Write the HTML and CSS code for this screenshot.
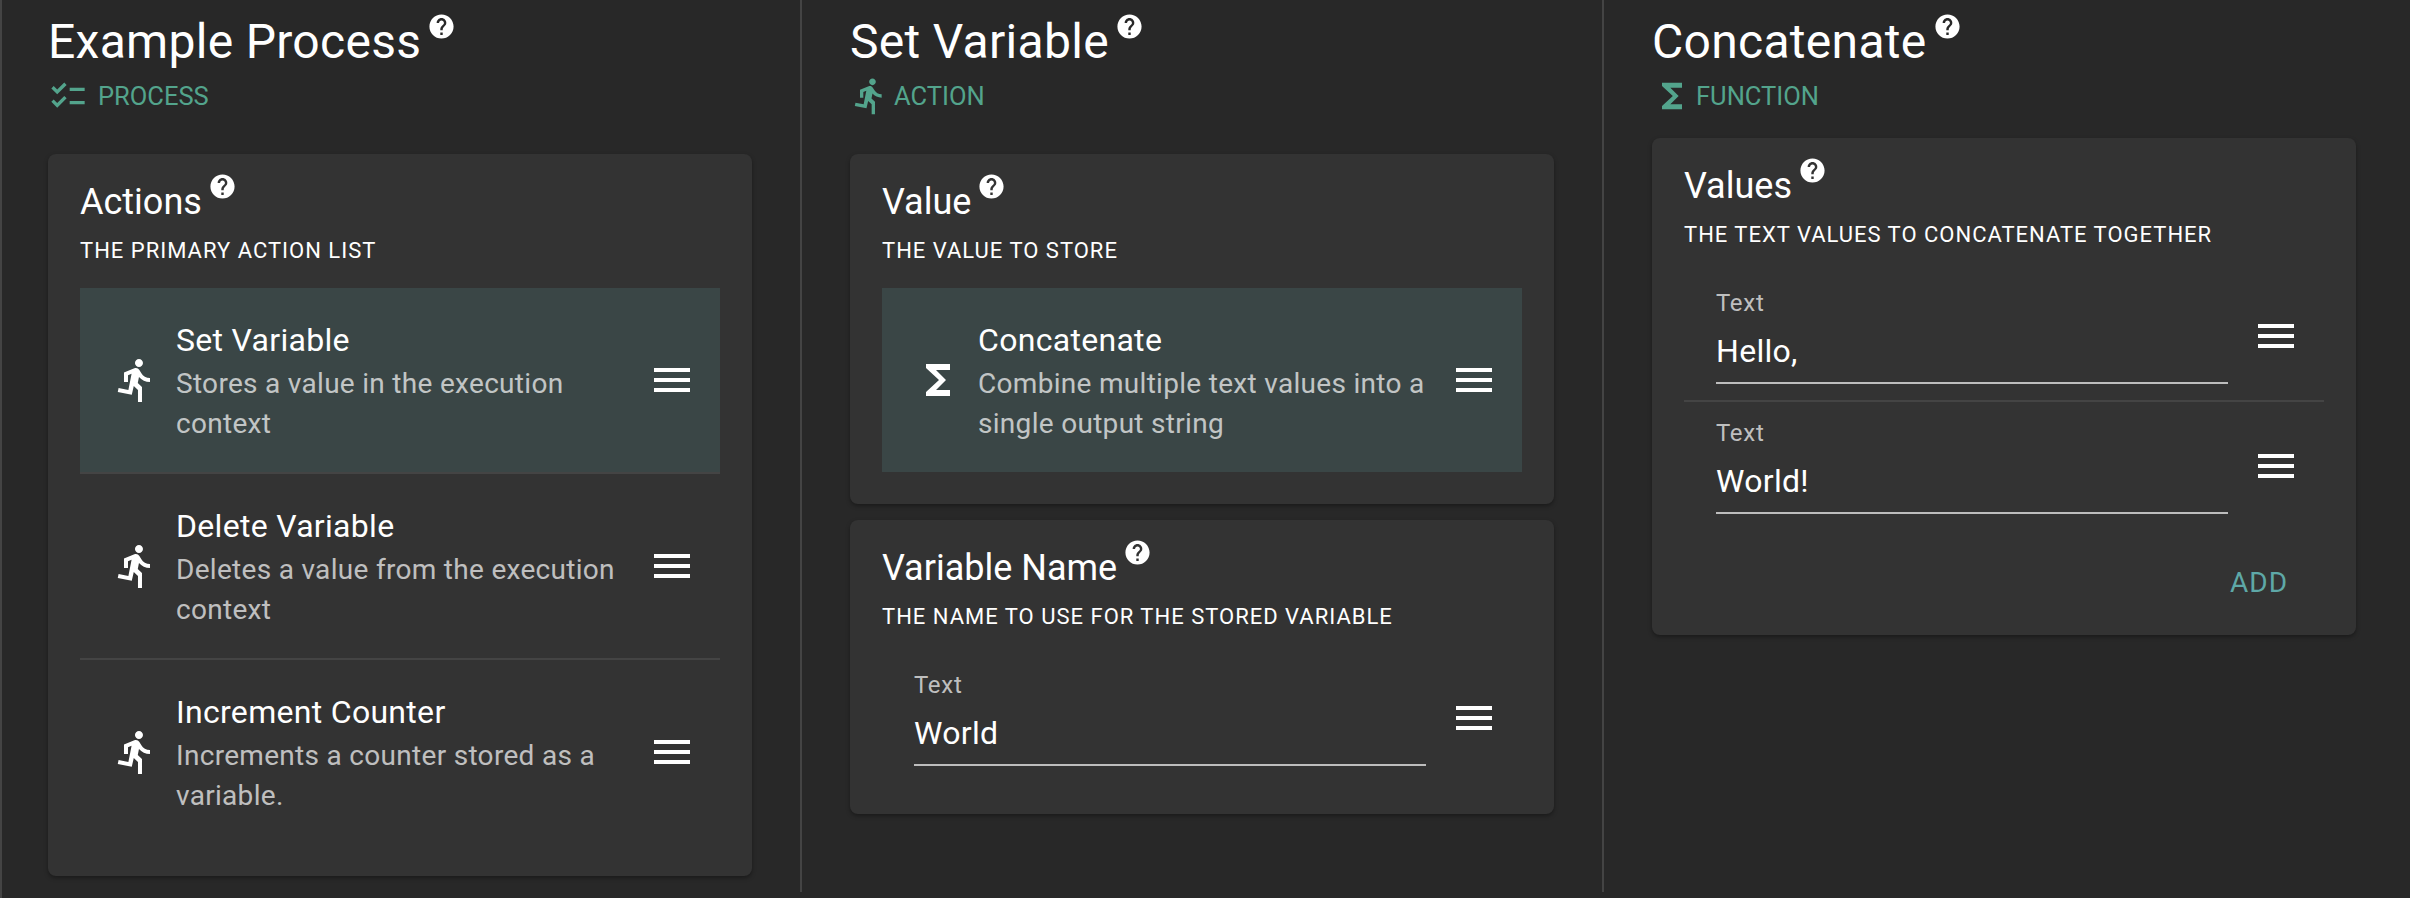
FILE: index.html
```html
<!DOCTYPE html>
<html lang="en">

<head>
    <meta charset="UTF-8">
    <title>Example Process</title>
    <link rel="stylesheet" href="styles.css">
</head>

<body>
    <!-- Shared icons -->
    <svg class="icon-defs" width="0" height="0">
        <symbol id="i-help" viewBox="0 0 24 24"><path d="M12 2C6.48 2 2 6.48 2 12s4.48 10 10 10 10-4.48 10-10S17.52 2 12 2zm1 17h-2v-2h2v2zm2.07-7.75l-.9.92C13.45 12.9 13 13.5 13 15h-2v-.5c0-1.1.45-2.1 1.17-2.83l1.24-1.26c.37-.36.59-.86.59-1.41 0-1.1-.9-2-2-2s-2 .9-2 2H8c0-2.21 1.79-4 4-4s4 1.79 4 4c0 .88-.36 1.68-.93 2.25z"/></symbol>
        <symbol id="i-run" viewBox="0 0 24 24"><path d="M13.49 5.48c1.1 0 2-.9 2-2s-.9-2-2-2-2 .9-2 2 .9 2 2 2zm-3.6 13.9l1-4.4 2.1 2v6h2v-7.5l-2.1-2 .6-3c1.3 1.5 3.3 2.5 5.5 2.5v-2c-1.9 0-3.5-1-4.3-2.4l-1-1.6c-.4-.6-1-1-1.7-1-.3 0-.5.1-.8.1l-5.2 2.2v4.7h2v-3.4l1.8-.7-1.6 8.1-4.9-1-.4 2 7 1.4z"/></symbol>
        <symbol id="i-sigma" viewBox="0 0 24 24"><path d="M18 4H6v2l6.5 6L6 18v2h12v-3h-7l5-5-5-5h7z"/></symbol>
        <symbol id="i-checks" viewBox="0 0 24 24"><path d="M22 7h-9v2h9V7zm0 8h-9v2h9v-2zM5.54 11L2 7.46l1.41-1.41 2.12 2.12 4.24-4.24 1.41 1.41L5.54 11zm0 8L2 15.46l1.41-1.41 2.12 2.12 4.24-4.24 1.41 1.41L5.54 19z"/></symbol>
        <symbol id="i-menu" viewBox="0 0 24 24"><path d="M3 18h18v-2H3v2zm0-5h18v-2H3v2zm0-7v2h18V6H3z"/></symbol>
    </svg>

    <div class="panels">
        <!-- Process -->
        <section class="panel">
            <header class="panel-header">
                <h1>Example Process <svg class="help"><use href="#i-help"/></svg></h1>
                <div class="kind"><svg class="kind-icon kind-icon-wide"><use href="#i-checks"/></svg>PROCESS</div>
            </header>
            <div class="card-stack">
                <div class="card">
                    <h2>Actions <svg class="help"><use href="#i-help"/></svg></h2>
                    <div class="card-sub">THE PRIMARY ACTION LIST</div>
                    <div class="list">
                        <div class="list-item selected">
                            <svg class="item-icon"><use href="#i-run"/></svg>
                            <div class="item-text">
                                <div class="item-title">Set Variable</div>
                                <div class="item-desc">Stores a value in the execution context</div>
                            </div>
                            <svg class="menu-icon"><use href="#i-menu"/></svg>
                        </div>
                        <div class="list-item">
                            <svg class="item-icon"><use href="#i-run"/></svg>
                            <div class="item-text">
                                <div class="item-title">Delete Variable</div>
                                <div class="item-desc">Deletes a value from the execution context</div>
                            </div>
                            <svg class="menu-icon"><use href="#i-menu"/></svg>
                        </div>
                        <div class="list-item">
                            <svg class="item-icon"><use href="#i-run"/></svg>
                            <div class="item-text">
                                <div class="item-title">Increment Counter</div>
                                <div class="item-desc">Increments a counter stored as a variable.</div>
                            </div>
                            <svg class="menu-icon"><use href="#i-menu"/></svg>
                        </div>
                    </div>
                </div>
            </div>
        </section>

        <!-- Action -->
        <section class="panel">
            <header class="panel-header">
                <h1>Set Variable <svg class="help"><use href="#i-help"/></svg></h1>
                <div class="kind"><svg class="kind-icon"><use href="#i-run"/></svg>ACTION</div>
            </header>
            <div class="card-stack">
                <div class="card">
                    <h2>Value <svg class="help"><use href="#i-help"/></svg></h2>
                    <div class="card-sub">THE VALUE TO STORE</div>
                    <div class="list">
                        <div class="list-item selected">
                            <svg class="item-icon"><use href="#i-sigma"/></svg>
                            <div class="item-text">
                                <div class="item-title">Concatenate</div>
                                <div class="item-desc">Combine multiple text values into a single output string</div>
                            </div>
                            <svg class="menu-icon"><use href="#i-menu"/></svg>
                        </div>
                    </div>
                </div>
                <div class="card">
                    <h2>Variable Name <svg class="help"><use href="#i-help"/></svg></h2>
                    <div class="card-sub">THE NAME TO USE FOR THE STORED VARIABLE</div>
                    <div class="list">
                        <div class="field-row">
                            <div class="field">
                                <label class="field-label">Text</label>
                                <div class="field-value">World</div>
                            </div>
                            <svg class="menu-icon"><use href="#i-menu"/></svg>
                        </div>
                    </div>
                </div>
            </div>
        </section>

        <!-- Function -->
        <section class="panel">
            <header class="panel-header">
                <h1>Concatenate <svg class="help"><use href="#i-help"/></svg></h1>
                <div class="kind"><svg class="kind-icon"><use href="#i-sigma"/></svg>FUNCTION</div>
            </header>
            <div class="card-stack card-stack-flush">
                <div class="card card-with-button">
                    <h2>Values <svg class="help"><use href="#i-help"/></svg></h2>
                    <div class="card-sub">THE TEXT VALUES TO CONCATENATE TOGETHER</div>
                    <div class="list">
                        <div class="field-row">
                            <div class="field">
                                <label class="field-label">Text</label>
                                <div class="field-value">Hello,</div>
                            </div>
                            <svg class="menu-icon"><use href="#i-menu"/></svg>
                        </div>
                        <div class="field-row">
                            <div class="field">
                                <label class="field-label">Text</label>
                                <div class="field-value">World!</div>
                            </div>
                            <svg class="menu-icon"><use href="#i-menu"/></svg>
                        </div>
                    </div>
                    <div class="card-actions">
                        <button class="btn-add">ADD</button>
                    </div>
                </div>
            </div>
        </section>
    </div>
</body>

</html>
```

FILE: styles.css
```css
:root {
    --page-color: #282828;
    --card-color: #333333;
    --selected-color: #3a4646;
    --line-color: #444444;
    --green-color: #53a48c;
    --teal-color: #5ea8a7;
}

* {
    margin: 0;
    padding: 0;
    box-sizing: border-box;
}

body {
    font-family: Roboto, 'Liberation Sans', sans-serif;
    color: white;
    background-color: var(--page-color);
    height: 898px;
    overflow: hidden;
    border-left: 2px solid var(--line-color);
}

.icon-defs {
    display: block;
    height: 0;
}

.panels {
    display: flex;
    height: 892px;
}

.panel {
    flex: 0 0 802px;
    padding: 12px 48px 0;
    border-left: 2px solid var(--line-color);
}

.panel:first-child {
    flex-basis: 798px;
    padding-left: 46px;
    border-left: none;
}

.panel svg {
    fill: currentColor;
    flex: none;
}

h1 {
    display: flex;
    font-size: 48px;
    font-weight: 400;
    line-height: 59px;
    letter-spacing: 0.3px;
}

h2 {
    display: flex;
    font-size: 36px;
    font-weight: 400;
    line-height: 33px;
}

.help {
    width: 29px;
    height: 29px;
    margin-left: 6px;
    color: white;
}

h2 .help {
    margin-top: -14px;
}

.kind {
    display: flex;
    align-items: center;
    height: 40px;
    margin-top: 5px;
    font-size: 25.5px;
    color: var(--green-color);
}

.kind-icon {
    width: 40px;
    height: 40px;
    margin-right: 4px;
}

.kind-icon-wide {
    margin-right: 10px;
}

.card-stack {
    margin-top: 38px;
}

.card-stack-flush {
    margin-top: 22px;
}

.card {
    padding: 32px;
    margin-bottom: 16px;
    background-color: var(--card-color);
    border-radius: 8px;
    box-shadow: 0 2px 4px rgba(0, 0, 0, 0.35);
}

.card-with-button {
    padding-bottom: 17px;
}

.card-sub {
    margin-top: 17px;
    margin-bottom: 22px;
    font-size: 22px;
    line-height: 30px;
    letter-spacing: 1px;
}

.list-item {
    display: flex;
    align-items: center;
    height: 186px;
    padding: 0 24px 0 32px;
    border-bottom: 2px solid var(--line-color);
}

.list-item:last-child {
    border-bottom: none;
    height: 184px;
}

.list-item.selected {
    background-color: var(--selected-color);
    background-clip: padding-box;
}

.item-icon {
    width: 48px;
    height: 48px;
}

.item-text {
    flex: 1;
    margin: 0 24px 0 16px;
    padding-top: 4px;
}

.item-title {
    font-size: 32px;
    line-height: 40px;
    letter-spacing: 0.3px;
    margin-bottom: 4px;
}

.item-desc {
    font-size: 28px;
    line-height: 40px;
    letter-spacing: 0.3px;
    color: rgba(255, 255, 255, 0.7);
}

.menu-icon {
    width: 48px;
    height: 48px;
}

.field-row {
    display: flex;
    align-items: center;
    height: 130px;
    padding: 0 24px 0 32px;
    border-bottom: 2px solid var(--line-color);
}

.field-row:last-child {
    border-bottom: none;
    height: 128px;
}

.field {
    flex: 1;
    margin-right: 24px;
}

.field-label {
    display: block;
    font-size: 24px;
    line-height: 30px;
    letter-spacing: 0.7px;
    color: rgba(255, 255, 255, 0.7);
}

.field-value {
    margin-top: 11px;
    padding-bottom: 9px;
    font-size: 32px;
    line-height: 44px;
    letter-spacing: 0.3px;
    border-bottom: 2px solid #bdbdbd;
}

.card-actions {
    display: flex;
    justify-content: flex-end;
    margin-top: 16px;
    margin-right: 4px;
}

.btn-add {
    height: 72px;
    padding: 0 32px;
    font-family: inherit;
    font-size: 28px;
    letter-spacing: 1px;
    color: var(--teal-color);
    background: none;
    border: none;
}
```
